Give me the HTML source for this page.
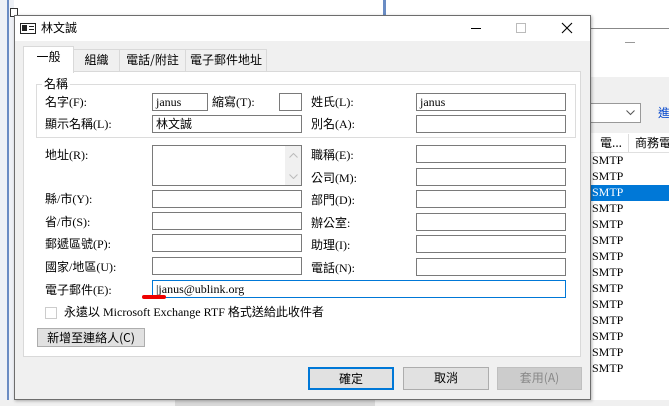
<!DOCTYPE html>
<html><head><meta charset="utf-8"><style>
*{margin:0;padding:0;box-sizing:border-box}
body{width:669px;height:406px;overflow:hidden;position:relative;background:#fff;font-family:"Liberation Serif","Noto Sans CJK TC",serif;font-size:12px;color:#000}
.a{position:absolute}
.in{position:absolute;background:#fff;border:1px solid #7a7a7a;height:18px;font-size:12px;line-height:16px;padding-left:3px}
.lb{position:absolute;font-size:12px;line-height:14px;white-space:nowrap}
.sm{position:absolute;left:592px;font-size:12px;line-height:15px;font-family:"Liberation Serif",serif}
.btn{position:absolute;background:#e1e1e1;border:1px solid #adadad;text-align:center;font-family:"Noto Sans CJK TC",sans-serif;font-size:12px;line-height:20px}
.tab{position:absolute;top:49px;height:22px;background:#f0f0f0;border:1px solid #d9d9d9;border-bottom:none;font-family:"Noto Sans CJK TC",sans-serif;font-size:12px;line-height:20px;text-align:center}
</style></head><body>
<div class="a" style="left:0;top:0;width:14px;height:406px;background:#eef1f6"></div>
<div class="a" style="left:7px;top:0;width:2px;height:406px;background:#6a8cc4"></div>
<div class="a" style="left:10px;top:8px;width:8px;height:9px;border:1px solid #333;background:#fff"></div>
<div class="a" style="left:383px;top:0;width:3px;height:16px;background:#6a8cc4"></div>
<div class="a" style="left:591px;top:28px;width:78px;height:1px;background:#888"></div>
<div class="a" style="left:625px;top:42px;width:10px;height:1px;background:#999"></div>
<div class="a" style="left:591px;top:77px;width:78px;height:56px;background:#f0f0f0"></div>
<div class="a" style="left:591px;top:103px;width:50px;height:20px;border:1px solid #999;border-left:none;background:#fff"></div>
<svg class="a" style="left:626px;top:110px" width="9" height="6"><path d="M0.5 0.5L4.5 4.5L8.5 0.5" stroke="#555" fill="none"/></svg>
<div class="lb" style="left:658px;top:106px;color:#0044cc;font-family:'Noto Sans CJK TC',sans-serif">進</div>
<div class="a" style="left:591px;top:133px;width:78px;height:20px;background:#fff;border-bottom:1px solid #e0e0e0"></div>
<div class="lb" style="left:600px;top:136px;font-family:'Noto Sans CJK TC',sans-serif">電...</div>
<div class="a" style="left:628px;top:134px;width:1px;height:18px;background:#ddd"></div>
<div class="lb" style="left:635px;top:136px;font-family:'Noto Sans CJK TC',sans-serif">商務電</div>
<div class="a" style="left:591px;top:185px;width:78px;height:16px;background:#0078d7"></div>
<div class="sm" style="top:153px">SMTP</div>
<div class="sm" style="top:169px">SMTP</div>
<div class="sm" style="top:185px;color:#fff">SMTP</div>
<div class="sm" style="top:201px">SMTP</div>
<div class="sm" style="top:217px">SMTP</div>
<div class="sm" style="top:233px">SMTP</div>
<div class="sm" style="top:249px">SMTP</div>
<div class="sm" style="top:265px">SMTP</div>
<div class="sm" style="top:281px">SMTP</div>
<div class="sm" style="top:297px">SMTP</div>
<div class="sm" style="top:313px">SMTP</div>
<div class="sm" style="top:329px">SMTP</div>
<div class="sm" style="top:345px">SMTP</div>
<div class="sm" style="top:361px">SMTP</div>
<div class="a" style="left:0;top:400px;width:669px;height:6px;background:#f0f0f0"></div>
<div class="a" style="left:175px;top:400px;width:200px;height:6px;background:#d8d8d8"></div>

<div class="a" style="left:14px;top:15px;width:577px;height:385px;background:#f0f0f0;border:1px solid #6d6d6d;box-shadow:1px 1px 3px rgba(0,0,0,.3)"></div>
<div class="a" style="left:15px;top:16px;width:575px;height:25px;background:#fff"></div>
<div class="a" style="left:20px;top:23px;width:16px;height:11px;border:1px solid #222;background:#fff"></div>
<div class="a" style="left:22px;top:25px;width:5px;height:6px;background:#222"></div>
<div class="a" style="left:29px;top:26px;width:5px;height:1px;background:#222"></div>
<div class="a" style="left:29px;top:29px;width:5px;height:1px;background:#222"></div>
<div class="lb" style="left:41px;top:21px;font-family:'Noto Sans CJK TC',sans-serif;font-size:12px">林文誠</div>
<div class="a" style="left:471px;top:28px;width:10px;height:1px;background:#000"></div>
<div class="a" style="left:516px;top:23px;width:10px;height:10px;border:1px solid #bbb"></div>
<svg class="a" style="left:561px;top:22px" width="12" height="12"><path d="M1 1L11 11M11 1L1 11" stroke="#000" stroke-width="1.1"/></svg>

<div class="tab" style="left:73px;width:47px">組織</div>
<div class="tab" style="left:119px;width:67px">電話/附註</div>
<div class="tab" style="left:185px;width:82px">電子郵件地址</div>
<div class="a" style="left:23px;top:71px;width:558px;height:286px;background:#fff;border:1px solid #d9d9d9"></div>
<div class="tab" style="left:23px;top:46px;width:51px;height:27px;background:#fff;border-color:#d9d9d9;line-height:20px">一般</div>

<div class="a" style="left:36px;top:84px;width:540px;height:54px;border:1px solid #dcdcdc"></div>
<div class="lb" style="left:42px;top:77px;background:#fff;padding:0 2px;font-family:'Noto Sans CJK TC',sans-serif">名稱</div>

<div class="lb" style="left:45px;top:95px">名字(F):</div>
<div class="in" style="left:152px;top:93px;width:56px">janus</div>
<div class="lb" style="left:212px;top:95px">縮寫(T):</div>
<div class="in" style="left:279px;top:93px;width:23px"></div>
<div class="lb" style="left:311px;top:95px">姓氏(L):</div>
<div class="in" style="left:416px;top:93px;width:150px">janus</div>
<div class="lb" style="left:45px;top:117px">顯示名稱(L):</div>
<div class="in" style="left:152px;top:115px;width:150px;font-family:'Noto Sans CJK TC',sans-serif">林文誠</div>
<div class="lb" style="left:311px;top:117px">別名(A):</div>
<div class="in" style="left:416px;top:115px;width:150px"></div>

<div class="lb" style="left:45px;top:148px">地址(R):</div>
<div class="in" style="left:152px;top:145px;width:150px;height:41px"></div>
<div class="a" style="left:285px;top:146px;width:16px;height:39px;background:#f0f0f0"></div>
<svg class="a" style="left:289px;top:153px" width="9" height="26"><path d="M0.5 4.5L4.5 0.5L8.5 4.5M0.5 21.5L4.5 25.5L8.5 21.5" stroke="#bbb" fill="none"/></svg>
<div class="lb" style="left:45px;top:192px">縣/市(Y):</div>
<div class="in" style="left:152px;top:190px;width:150px"></div>
<div class="lb" style="left:45px;top:215px">省/市(S):</div>
<div class="in" style="left:152px;top:212px;width:150px"></div>
<div class="lb" style="left:45px;top:237px">郵遞區號(P):</div>
<div class="in" style="left:152px;top:234px;width:150px"></div>
<div class="lb" style="left:45px;top:260px">國家/地區(U):</div>
<div class="in" style="left:152px;top:257px;width:150px"></div>

<div class="lb" style="left:311px;top:148px">職稱(E):</div>
<div class="in" style="left:416px;top:145px;width:150px"></div>
<div class="lb" style="left:311px;top:171px">公司(M):</div>
<div class="in" style="left:416px;top:168px;width:150px"></div>
<div class="lb" style="left:311px;top:193px">部門(D):</div>
<div class="in" style="left:416px;top:190px;width:150px"></div>
<div class="lb" style="left:311px;top:216px">辦公室:</div>
<div class="in" style="left:416px;top:213px;width:150px"></div>
<div class="lb" style="left:311px;top:238px">助理(I):</div>
<div class="in" style="left:416px;top:235px;width:150px"></div>
<div class="lb" style="left:311px;top:261px">電話(N):</div>
<div class="in" style="left:416px;top:258px;width:150px"></div>

<div class="lb" style="left:45px;top:283px">電子郵件(E):</div>
<div class="in" style="left:152px;top:280px;width:414px;border-color:#0078d7">|janus@ublink.org</div>
<div class="a" style="left:142px;top:295px;width:24px;height:4px;background:#e00;border-radius:2px"></div>

<div class="a" style="left:45px;top:307px;width:12px;height:12px;border:1px solid #ccc;background:#fff"></div>
<div class="lb" style="left:64px;top:305px">永遠以 Microsoft Exchange RTF 格式送給此收件者</div>
<div class="btn" style="left:37px;top:328px;width:108px;height:19px;line-height:17px">新增至連絡人(C)</div>

<div class="btn" style="left:308px;top:367px;width:86px;height:23px;border:2px solid #0078d7;line-height:19px">確定</div>
<div class="btn" style="left:403px;top:367px;width:86px;height:23px">取消</div>
<div class="btn" style="left:497px;top:367px;width:85px;height:23px;background:#ccc;border-color:#bfbfbf;color:#888">套用(A)</div>
</body></html>
